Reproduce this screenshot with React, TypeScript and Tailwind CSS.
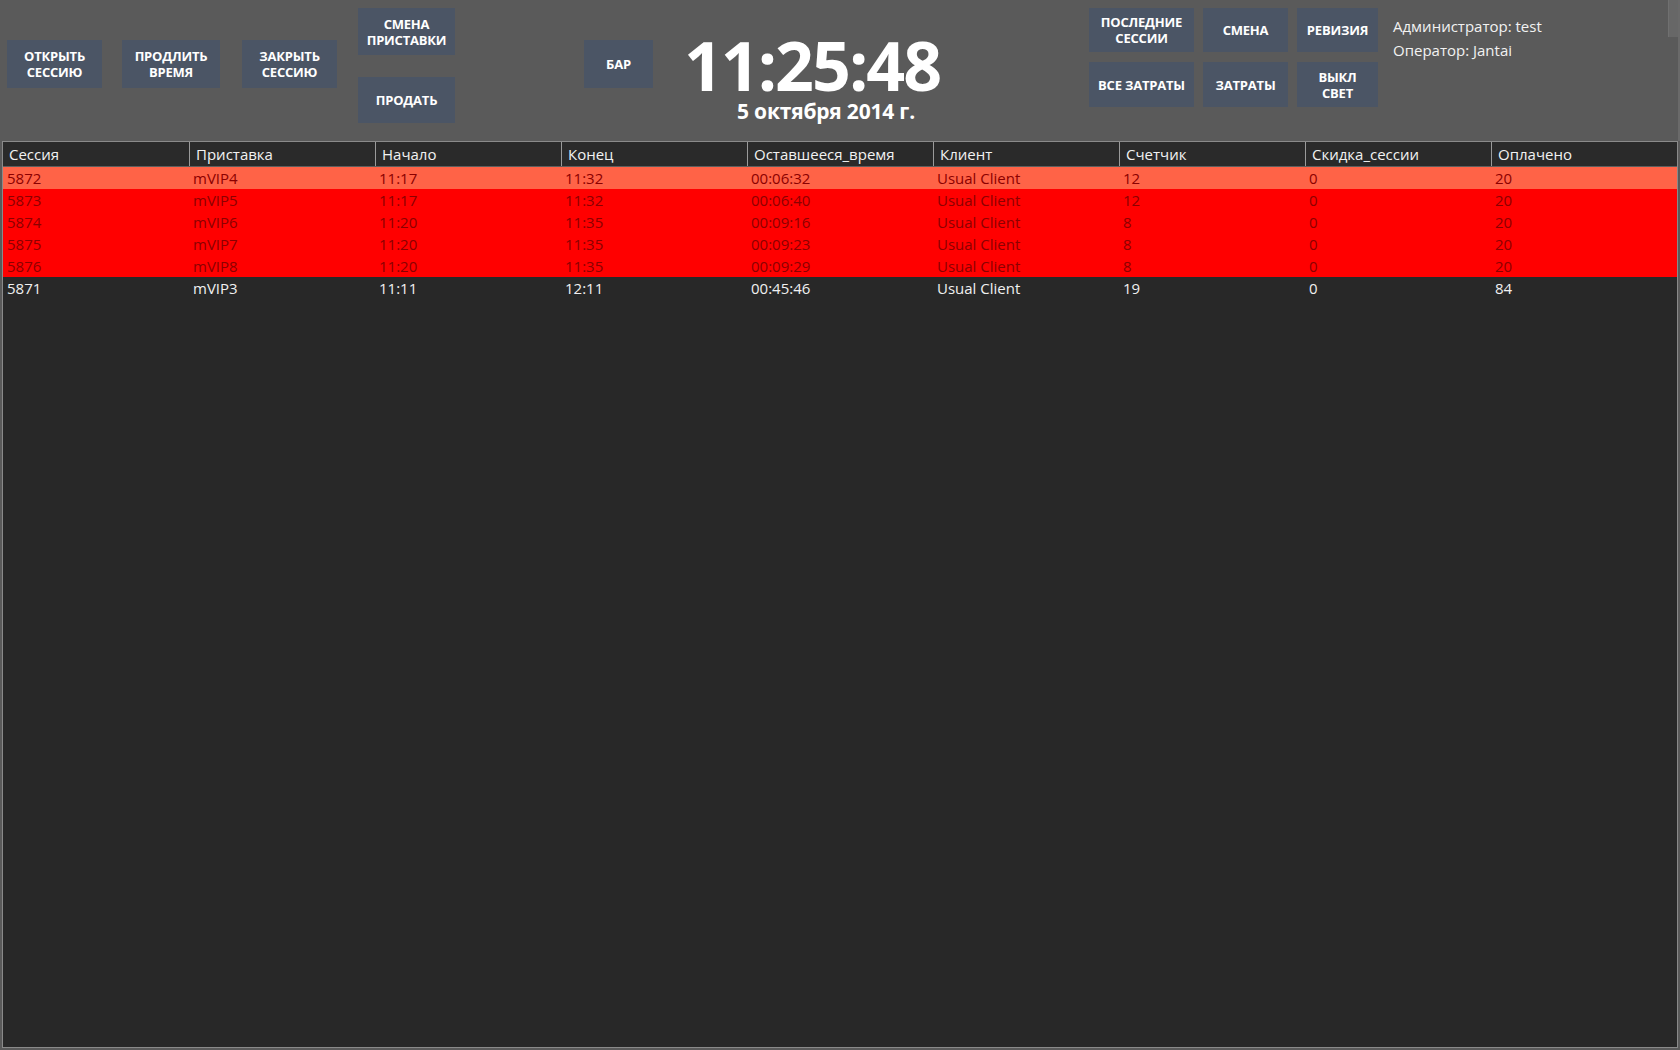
import React from 'react'

const font = { fontFamily: '"Open Sans", "Noto Sans", sans-serif' }

const columns = [
  'Сессия',
  'Приставка',
  'Начало',
  'Конец',
  'Оставшееся_время',
  'Клиент',
  'Счетчик',
  'Скидка_сессии',
  'Оплачено',
]

type Row = { cells: string[]; tone: 'warn' | 'alert' | 'normal' }

const rows: Row[] = [
  { tone: 'warn', cells: ['5872', 'mVIP4', '11:17', '11:32', '00:06:32', 'Usual Client', '12', '0', '20'] },
  { tone: 'alert', cells: ['5873', 'mVIP5', '11:17', '11:32', '00:06:40', 'Usual Client', '12', '0', '20'] },
  { tone: 'alert', cells: ['5874', 'mVIP6', '11:20', '11:35', '00:09:16', 'Usual Client', '8', '0', '20'] },
  { tone: 'alert', cells: ['5875', 'mVIP7', '11:20', '11:35', '00:09:23', 'Usual Client', '8', '0', '20'] },
  { tone: 'alert', cells: ['5876', 'mVIP8', '11:20', '11:35', '00:09:29', 'Usual Client', '8', '0', '20'] },
  { tone: 'normal', cells: ['5871', 'mVIP3', '11:11', '12:11', '00:45:46', 'Usual Client', '19', '0', '84'] },
]

const toneClass: Record<Row['tone'], string> = {
  warn: 'bg-[#ff6347] text-[#8b0000]',
  alert: 'bg-[#ff0000] text-[#8b0000]',
  normal: 'bg-[#282828] text-[#f0f0f0]',
}

function Btn({ label, className }: { label: React.ReactNode; className: string }) {
  return (
    <button
      className={`flex items-center justify-center bg-[#4b5565] text-white text-[13px] font-bold leading-[16px] text-center tracking-[-0.2px] ${className}`}
    >
      {label}
    </button>
  )
}

export default function App() {
  return (
    <div className="w-[1680px] h-[1050px] bg-[#5a5a5a] flex flex-col overflow-hidden" style={font}>
      {/* top panel */}
      <div className="h-[141px] flex shrink-0">
        <div className="flex items-start">
          <Btn className="ml-[7px] mt-[40px] w-[95px] h-[48px]" label={<>ОТКРЫТЬ<br />СЕССИЮ</>} />
          <Btn className="ml-[20px] mt-[40px] w-[98px] h-[48px]" label={<>ПРОДЛИТЬ<br />ВРЕМЯ</>} />
          <Btn className="ml-[22px] mt-[40px] w-[95px] h-[48px]" label={<>ЗАКРЫТЬ<br />СЕССИЮ</>} />
          <div className="ml-[21px] mt-[8px] flex flex-col gap-[22px]">
            <Btn className="w-[97px] h-[47px]" label={<>СМЕНА<br />ПРИСТАВКИ</>} />
            <Btn className="w-[97px] h-[46px]" label="ПРОДАТЬ" />
          </div>
          <Btn className="ml-[129px] mt-[40px] w-[69px] h-[48px]" label="БАР" />
          <div className="ml-[34px] w-[250px] flex flex-col items-center">
            <div className="text-white font-bold text-[68px] leading-[56px] mt-[37px] tracking-[-2px] whitespace-nowrap">11:25:48</div>
            <div className="text-white font-bold text-[21px] leading-[24px] mt-[6px] ml-[28px] tracking-[-0.2px] whitespace-nowrap">5 октября 2014 г.</div>
          </div>
        </div>
        <div className="ml-[152px] mt-[8px] grid grid-cols-[105px_85px_81px] gap-x-[9px] gap-y-[10px] h-fit">
          <Btn className="h-[44px]" label={<>ПОСЛЕДНИЕ<br />СЕССИИ</>} />
          <Btn className="h-[44px]" label="СМЕНА" />
          <Btn className="h-[44px]" label="РЕВИЗИЯ" />
          <Btn className="h-[45px]" label="ВСЕ ЗАТРАТЫ" />
          <Btn className="h-[45px]" label="ЗАТРАТЫ" />
          <Btn className="h-[45px]" label={<>ВЫКЛ<br />СВЕТ</>} />
        </div>
        <div className="ml-[15px] mt-[16px] flex flex-col gap-[4px] text-[#f2f2f2] text-[15px] leading-[20px]">
          <div>Администратор: test</div>
          <div>Оператор: Jantai</div>
        </div>
        <div className="ml-auto w-[12px] flex">
          <div className="w-[10px] h-[37px] bg-[#676767] border-l border-[#707070]" />
          <div className="w-[2px] bg-[#6a6a6a]" />
        </div>
      </div>

      {/* sessions table */}
      <div className="flex-1 ml-[2px] mr-[2px] mb-[2px] bg-[#282828] border border-[#8a8a8a] flex flex-col">
        <div className="grid grid-cols-9 h-[25px] bg-[#2a2a2a] border-b border-[#5e5e5e] text-[#f2f2f2] text-[15px]">
          {columns.map((c, i) => (
            <div
              key={c}
              className={`flex items-center pl-[6px] ${i > 0 ? 'border-l border-[#9a9a9a]' : ''}`}
            >
              {c}
            </div>
          ))}
        </div>
        {rows.map((r) => (
          <div key={r.cells[0]} className={`grid grid-cols-9 h-[22px] text-[15px] ${toneClass[r.tone]}`}>
            {r.cells.map((c, i) => (
              <div key={i} className="flex items-center pl-[4px] leading-[20px]">
                {c}
              </div>
            ))}
          </div>
        ))}
      </div>
    </div>
  )
}
